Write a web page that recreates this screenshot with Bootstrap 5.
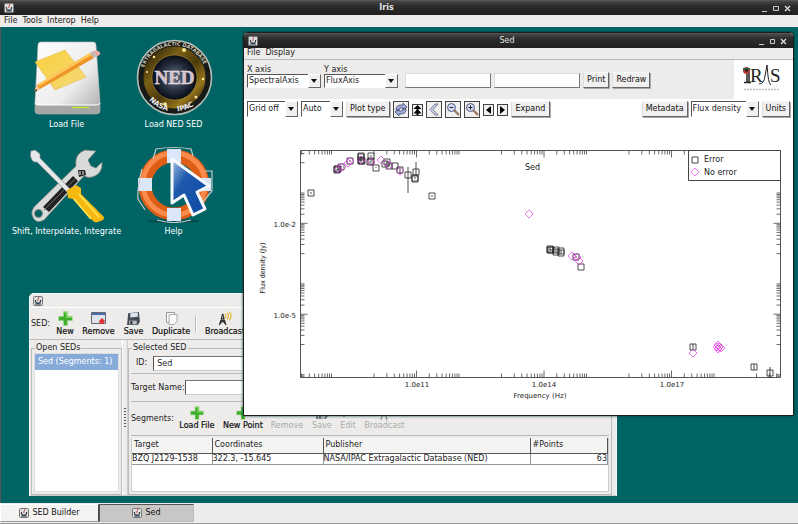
<!DOCTYPE html>
<html lang="en">
<head>
<meta charset="utf-8">
<meta name="viewport" content="width=device-width, initial-scale=1">
<title>Iris</title>
<link href="https://cdn.jsdelivr.net/npm/bootstrap@5.3.0/dist/css/bootstrap.min.css" rel="stylesheet">
<style>
body{font:8px/10px "DejaVu Sans",sans-serif;color:#222;background:#006464}
svg{display:block;flex:none}
.titlebar{height:15px;background:linear-gradient(#484848,#2c2c2c 35%,#1f1f1f);color:#e4e4e4;padding:0 6px 0 4px;border-top:1px solid #555}
.titlebar .caption{font-weight:normal;font-size:8px;line-height:14px;margin:0}
.titlebar.main .caption{font-weight:bold;font-size:8px}
.winbtns button,.plain{background:none;border:0;padding:0;color:inherit;font:inherit;line-height:inherit}
.menus{background:#edeceb;height:12px;line-height:11px;padding-left:4px;gap:5px}
.menus a{color:#1a1a1a;text-decoration:none}
.desktop{border-left:1px solid #555;overflow:hidden}
.launchers{display:grid;grid-template-columns:repeat(2,107px);grid-auto-rows:107px;padding:11px 0 0 12px}
.launchers button{color:#fff;white-space:nowrap}
.launchers svg{margin-bottom:4px}
.win{position:absolute;background:#edeceb}
.builder{left:28px;top:266px;right:181px;border-radius:5px 5px 0 0;border:1px solid #f8f8f8;border-bottom-color:#ccc}
.plotwin{left:242px;top:5px;right:4px;border:1px solid #1d1d1d;border-radius:4px 4px 0 0;overflow:hidden;background:#fff;box-shadow:0 0 3px #003c3c}
.plotwin .menus{border-bottom:1px solid #bbb;padding-left:3px;line-height:10px}
.axisbar{background:#edeceb;height:39px;padding-left:3px;gap:3px}
.axisbar .pad{padding-bottom:11px}
.axisbar label{display:block;line-height:9px}
.toolrow{padding:2px 3px 0;height:25px}
.toolrow,.tight{gap:3px}
.btn3d{background:#f1f0ef;border:1px solid #fafafa;border-color:#fafafa #666 #666 #ddd;box-shadow:1px 1px 0 #aaa;height:16px;padding:0 3px;font:inherit;color:#111;white-space:nowrap}
.btn3d.wide{padding:0 4px}
.ib{border:1px solid #444;background:#f1f0ef;padding:0;width:16px;height:17px}
.ib.sm{width:11px;height:12px}
.combo{display:grid;flex:none}
.combo>*{grid-area:1/1}
.combo select{appearance:none;font:inherit;color:#222;background:#fff;border:1px solid #fff;border-color:#555 #ddd #fff #555;border-radius:0;height:14px;padding:0 14px 0 1px;width:100%}
.toolrow .combo select{height:16px}
.combo::after{content:"";grid-area:1/1;justify-self:end;width:13px;pointer-events:none;border:1px solid #fff;border-color:#fff #666 #666 #fff;background:#f1f0ef}
.combo svg{justify-self:end;align-self:center;margin-right:4px;z-index:1;pointer-events:none}
.combo-axis{width:74px}.combo-grid{width:51px}.combo-scale{width:42px}.combo-flux{width:68px}
.field{font:inherit;background:#fff;border:1px solid #eee;border-color:#777 #ccc #ccc #555;border-radius:0;padding:0 3px;color:#222;height:15px;min-width:0}
.axisbar .field{width:86px;border-color:#ddd #777 #777 #ddd}
.logo{background:#fff;width:59px;height:39px}
.btitle{height:14px;padding:2px 3px;border-bottom:1px solid #fff}
.tools{border-bottom:1px solid #bbb;height:32px;padding-left:1px}
.tools button{white-space:nowrap;color:#111;-webkit-text-stroke:.2px #111}
.tools button:disabled{color:#aaa;-webkit-text-stroke:0}
.tools svg{margin-bottom:1px}
.w1{width:30px}.w2{width:37px}.w3{width:33px}.w4{width:42px}.w5{width:50px}.w6{width:46px}.w7{width:28px}.w8{width:24px}.w9{width:49px}
.vsep{width:2px;height:17px;border-left:1px solid #bbb;background:#fff;margin:0 3px}
.group{border:1px solid #bbb;padding:0 2px 2px;margin-top:3px}
.group legend{font:inherit;float:none;width:auto;margin:0 0 0 1px;padding:0 1px;background:#edeceb;line-height:10px;white-space:nowrap}
.openlist{width:91px;margin-left:1px;flex:none}
.seds{background:#fff;height:139px;border:1px solid #ddd}
.seds .list-group-item{background:#86abd9;color:#fff;border:0;border-radius:0;padding:0 3px;line-height:16px;white-space:nowrap}
.split{width:6px;flex:none;border-right:1px solid #ccc;border-left:1px solid #fff}
.split i{width:2px;height:20px;background:repeating-linear-gradient(#555 0 1px,transparent 1px 3px)}
.idrow{height:21px;padding-left:5px;gap:6px;border-bottom:1px solid #bbb}
.idrow.target{height:28px;padding:0;gap:0}
.seg{height:34px}
.segtable{background:#fff;height:54px;border:1px solid #ccc;border-top:0;margin-top:2px}
.segtable table{width:100%;table-layout:fixed;border-collapse:collapse}
.segtable th{font-weight:normal;height:15px;padding:0 2px;background:#f4f4f3;border-right:1px solid #555;border-bottom:1px solid #555}
.segtable td{height:11px;padding:0;border-right:1px solid #999;border-bottom:1px solid #999;white-space:nowrap;line-height:10px}
.c1{width:80px}.c2{width:111px}.c3{width:207px}
.taskbar{background:#edeceb;height:21px;padding-top:1px;border-bottom:1px solid #999}
.taskbar button{height:18px;border:1px solid #eee;border-color:#fff #444 #999 #fff;background:#f4f3f2;font:inherit;color:#111;width:99px;gap:3px}
.taskbar .active{background:#c8c7c6;border-color:#555 #bbb #bbb #555;width:95px}
.chart{width:100%;height:auto}
.chart text{font-size:8px;fill:#222}
.chart .axis{font-size:7px}
.chart .ylab{font-family:"DejaVu Sans Condensed","DejaVu Sans",sans-serif}
</style>
<script src="https://cdn.jsdelivr.net/npm/bootstrap@5.3.0/dist/js/bootstrap.bundle.min.js"></script>
</head>
<body class="d-flex flex-column vh-100 overflow-hidden">
<svg width="0" height="0" class="position-absolute" aria-hidden="true"><defs>
<symbol id="java" viewBox="0 0 10 10"><rect x=".5" y=".5" width="9" height="9" rx="1" fill="#ddd" stroke="#777"/><path d="M5 1c2 1-1 2 0 4" stroke="#c33" fill="none"/><path d="M2.500 4q-.5 3 2.500 3t2.500-3M2 8h6" stroke="#234" fill="none" stroke-width="1.100"/></symbol>
<symbol id="arrow" viewBox="0 0 6 4"><path d="M0 0h6L3 4z" fill="#111"/></symbol>
<symbol id="plus" viewBox="0 0 14 14"><path d="M5 .5h4V5h4.500v4H9v4.500H5V9H.5V5H5z" fill="#3fae2a" stroke="#b4dfa8" stroke-width=".7"/><path d="M6 1.500h2V6h5" fill="none" stroke="#7fd65f" stroke-width="1.200"/></symbol>
<symbol id="disk" viewBox="0 0 14 14"><path d="M2 2l10-1 1 9-2 3H1z" fill="#454b55"/><path d="M4 2l7-.7v4L4 6z" fill="#dce6f2"/><path d="M3 9h7v3.500H3z" fill="#b9bec6"/><path d="M4 9.500h2v3H4z" fill="#333"/></symbol>
<symbol id="tower" viewBox="0 0 16 16"><path d="M5 3L1.500 15M5 3l3.500 12M3.500 8h3M2.500 11.500h5M3 8l5 6M7 8l-5 6M4 4h2" stroke="#333" stroke-width="1.200" fill="none"/><path d="M7.500 3q2 2 0 4.500M9.700 2q3 3 0 7M12 1q4 4 0 9" stroke="#e0b52c" fill="none" stroke-width="1.200"/></symbol>
<linearGradient id="silver" x2="1" y2="1"><stop stop-color="#fff"/><stop offset=".6" stop-color="#ececec"/><stop offset="1" stop-color="#a9a9a9"/></linearGradient>
<linearGradient id="note" x2="1" y2="1"><stop stop-color="#fbd13e"/><stop offset="1" stop-color="#f3d877"/></linearGradient>
<linearGradient id="blue" x2="1" y2="1"><stop stop-color="#a3c2e6"/><stop offset=".35" stop-color="#1c58ac"/><stop offset="1" stop-color="#0d4aa5"/></linearGradient>
<radialGradient id="space"><stop stop-color="#6b7587"/><stop offset=".6" stop-color="#27303f"/><stop offset="1" stop-color="#080c16"/></radialGradient>
<linearGradient id="gold" x2="1" y2="1"><stop stop-color="#2a230a"/><stop offset=".3" stop-color="#7b6015"/><stop offset=".55" stop-color="#4b390b"/><stop offset=".8" stop-color="#98761c"/><stop offset="1" stop-color="#372a0a"/></linearGradient>
</defs></svg>

<header class="titlebar main d-flex align-items-center">
  <svg width="10" height="10"><use href="#java"/></svg>
  <h1 class="caption flex-grow-1 text-center">Iris</h1>
  <div class="winbtns d-flex">
    <button aria-label="Minimize"><svg width="11" height="10"><path d="M3 8.500h5" stroke="#ccc"/></svg></button>
    <button aria-label="Maximize"><svg width="12" height="10"><path d="M3.500 3.500h5v4h-5z" stroke="#ccc" fill="none"/></svg></button>
    <button aria-label="Close"><svg width="10" height="10"><path d="M3 3l5 5M8 3L3 8" stroke="#ddd" stroke-width="1.300"/></svg></button>
  </div>
</header>
<nav class="menus d-flex" aria-label="Main menu"><a href="#">File</a><a href="#">Tools</a><a href="#">Interop</a><a href="#">Help</a></nav>

<main class="desktop flex-grow-1 position-relative">
  <div class="launchers">
    <button class="plain d-flex flex-column align-items-center">
      <svg width="80" height="78" viewBox="27 38 80 78"><path d="M41 42h52q3 0 3 3l4 57v9q0 3-4 3H39q-4 0-4-3v-9l3-57q0-3 3-3z" fill="url(#silver)" stroke="#bbb" stroke-width=".6"/><path d="M35 103q0 2 4 2h57q4 0 4-2v8q0 3-4 3H39q-4 0-4-3z" fill="#a5a7a5"/><path d="M35 103q0 2 4 2h57q4 0 4-2" fill="none" stroke="#fff"/><path d="M72 107.500h17" stroke="#bde23c" stroke-width="1.500"/><path d="M35 62l30-12 21 27-31 13z" fill="url(#note)" stroke="#e2b338" stroke-width=".5"/><path d="M37 85l53-32 4 5-54 31-6 3z" fill="#ef9427"/><path d="M38 84l52-31 1.500 2-52 31z" fill="#ffc75b"/><path d="M37 85l3 4-6 3z" fill="#ecc894"/><path d="M33.500 92l3-3 .5 2z" fill="#222"/><path d="M90 53l3-2 4 5-3 2z" fill="#bbb"/><path d="M93 51l4-.5q4 1 3 4l-3 2z" fill="#e9a8a4"/></svg>
      <span>Load File</span></button>
    <button class="plain d-flex flex-column align-items-center">
      <svg width="80" height="78" viewBox="134 38 80 78"><circle cx="174.500" cy="77.500" r="37" fill="#171a17" stroke="#b5bdb8" stroke-width="1.600"/><circle cx="174.500" cy="77.500" r="26.500" fill="none" stroke="url(#gold)" stroke-width="9"/><circle cx="174.500" cy="77.500" r="22.500" fill="url(#space)" stroke="#b8983a" stroke-width=".5"/><g fill="#ffe794"><circle cx="184" cy="50" r="2"/><circle cx="154" cy="57" r="1.300"/><circle cx="165" cy="104" r="1.800"/><circle cx="203" cy="79" r="1.300"/><circle cx="196" cy="97" r="1.500"/><circle cx="147" cy="72" r="1"/></g><path id="arc1" d="M142.500 77.500a32 32 0 0 1 64 0" fill="none"/><path id="arc2" d="M146 96a34 34 0 0 0 57 0" fill="none"/><text font-size="5" font-weight="bold" fill="#cfc8b4"><textPath href="#arc1" startOffset="10">EXTRAGALACTIC DATABASE</textPath></text><text font-size="7" font-weight="bold" fill="#eee"><textPath href="#arc2" startOffset="5">NASA&#160;&#160;&#160;&#160;IPAC</textPath></text><text x="174.500" y="84" text-anchor="middle" font-family="Liberation Serif,serif" font-weight="bold" font-size="19" fill="#d4bfca" stroke="#f4e9ef" stroke-width=".4">NED</text></svg>
      <span>Load NED SED</span></button>
    <button class="plain d-flex flex-column align-items-center">
      <svg width="80" height="78" viewBox="27 145 80 78"><path d="M32 215q-1-4 2-8l42-41q-2-12 9-16l11 1-8 9 3 6 5 2 6-6q1 10-7 14-6 3-11 0L44 220q-9 5-12-5z" fill="#d9dbd9" stroke="#777" stroke-width=".7"/><path d="M43 207l30-31 5 5-29 31z" fill="#222"/><path d="M44 210l32-32" stroke="#666"/><circle cx="38.500" cy="213.500" r="4" fill="#006464" stroke="#888"/><path d="M78 170l7 0 1 5-7 2z" fill="#222"/><path d="M80 171v4m3-4v4" stroke="#eee"/><path d="M31 151l4-1 5 4v4l30 31-3 3-30-30h-3q-5-4-3-11z" fill="#e4e6e7" stroke="#888" stroke-width=".6"/><path d="M67 190l9-5 5 3v6l22 22q2 2 0 4l-5 2q-3 1-5-1l-20-22-5-1z" fill="#f5b911"/><path d="M79 194l20 23M74 199l17 20" stroke="#ffe44e" stroke-width="1.800"/></svg>
      <span>Shift, Interpolate, Integrate</span></button>
    <button class="plain d-flex flex-column align-items-center">
      <svg width="80" height="78" viewBox="134 145 80 78"><ellipse cx="173" cy="221" rx="27" ry="2" fill="#00403f" opacity=".6"/><circle cx="174" cy="185" r="29" fill="none" stroke="#de5e16" stroke-width="13"/><circle cx="174" cy="184" r="31" fill="none" stroke="#fa8a4b" stroke-width="5"/><path d="M167 149h14v14h-14zM167 208h14v13h-14zM138 178h14v13h-14zM198 178h13v13h-13z" fill="#dbe7f8"/><path d="M153 159l3-10q18-3 35 0l2 7M142 169q-5 20-4 30l7 11M204 171h8v20l-10 12M157 220q17 5 34 0" fill="none" stroke="#bfcac6" stroke-width="1.200"/><path d="M172 159v44l12-8 9 20 12-6-8-17 12-6z" fill="url(#blue)" stroke="#f6f8fb" stroke-width="3" stroke-linejoin="round"/></svg>
      <span>Help</span></button>
  </div>

  <section class="win builder" aria-label="SED Builder">
    <div class="btitle"><svg width="10" height="10"><use href="#java"/></svg></div>
    <div class="tools d-flex align-items-center">
      <span>SED:</span>
      <button class="plain w1 d-flex flex-column align-items-center"><svg width="15" height="15"><use href="#plus"/></svg>New</button>
      <button class="plain w2 d-flex flex-column align-items-center"><svg width="15" height="15" viewBox="0 0 15 15"><path d="M.5 1.500h14v11H.5z" fill="#dfe3ea" stroke="#667"/><path d="M1 2h13v2H1z" fill="#4a6ea9"/><path d="M8 10l3-3 3 3-2 3H9z" fill="#d33"/></svg>Remove</button>
      <button class="plain w3 d-flex flex-column align-items-center"><svg width="15" height="15"><use href="#disk"/></svg>Save</button>
      <button class="plain w4 d-flex flex-column align-items-center"><svg width="15" height="15" viewBox="0 0 15 15"><path d="M2.500 1.500h8v10h-8z" fill="#fff" stroke="#999"/><path d="M5 3.500h8v7l-3 3H5z" fill="#fafafa" stroke="#aaa"/></svg>Duplicate</button>
      <span class="vsep"></span>
      <button class="plain w5 d-flex flex-column align-items-center"><svg width="15" height="15"><use href="#tower"/></svg>Broadcast</button>
    </div>
    <div class="d-flex">
      <fieldset class="group openlist"><legend>Open SEDs</legend>
        <ul class="list-group seds rounded-0 mb-0"><li class="list-group-item">Sed (Segments: 1)</li></ul>
      </fieldset>
      <div class="split d-flex align-items-center justify-content-center"><i></i></div>
      <fieldset class="group flex-grow-1 me-1"><legend>Selected SED</legend>
        <div class="idrow d-flex align-items-center"><label for="sid">ID:</label><input id="sid" class="field flex-grow-1" value="Sed"></div>
        <div class="idrow target d-flex align-items-center"><label for="tname">Target Name:</label><input id="tname" class="field flex-grow-1"></div>
        <div class="tools seg d-flex align-items-center ps-0">
          <span>Segments:</span>
          <button class="plain w6 d-flex flex-column align-items-center"><svg width="14" height="14"><use href="#plus"/></svg>Load File</button>
          <button class="plain w6 d-flex flex-column align-items-center"><svg width="14" height="14"><use href="#plus"/></svg>New Point</button>
          <button class="plain w4 d-flex flex-column align-items-center" disabled><svg width="14" height="14"><path d="M1 2h12v6H1z" fill="#777"/></svg>Remove</button>
          <button class="plain w7 d-flex flex-column align-items-center" disabled><svg width="14" height="14" opacity=".7"><use href="#disk"/></svg>Save</button>
          <button class="plain w8 d-flex flex-column align-items-center" disabled><svg width="14" height="14"><path d="M2 11l2-6 8-4-2 7z" fill="#888"/></svg>Edit</button>
          <button class="plain w9 d-flex flex-column align-items-center" disabled><svg width="14" height="14"><path d="M4 14L7 4l3 10M5 9h4" stroke="#777" fill="none"/></svg>Broadcast</button>
        </div>
        <div class="segtable"><table>
          <thead><tr><th class="c1">Target</th><th class="c2">Coordinates</th><th class="c3">Publisher</th><th>#Points</th></tr></thead>
          <tbody><tr><td>BZQ J2129-1538</td><td>322.3, -15.645</td><td>NASA/IPAC Extragalactic Database (NED)</td><td class="text-end">63</td></tr></tbody>
        </table></div>
      </fieldset>
    </div>
  </section>

  <section class="win plotwin" aria-label="Sed">
    <div class="titlebar d-flex align-items-center">
      <svg width="10" height="10"><use href="#java"/></svg>
      <h2 class="caption flex-grow-1 text-center">Sed</h2>
      <div class="winbtns d-flex">
        <button aria-label="Minimize"><svg width="11" height="10"><path d="M3 8.500h5" stroke="#ccc"/></svg></button>
        <button aria-label="Maximize"><svg width="11" height="10"><path d="M3.500 3.500h4v4h-4z" stroke="#ccc" fill="none"/></svg></button>
        <button aria-label="Close"><svg width="9" height="10"><path d="M3 3l5 5M8 3L3 8" stroke="#ddd" stroke-width="1.300"/></svg></button>
      </div>
    </div>
    <nav class="menus d-flex" aria-label="Plot menu"><a href="#">File</a><a href="#">Display</a></nav>
    <div class="axisbar d-flex align-items-end">
      <div class="pad"><label for="xa">X axis</label><div class="combo combo-axis"><select id="xa"><option>SpectralAxis</option></select><svg width="6" height="4"><use href="#arrow"/></svg></div></div>
      <div class="pad"><label for="ya">Y axis</label><div class="combo combo-axis"><select id="ya"><option>FluxAxis</option></select><svg width="6" height="4"><use href="#arrow"/></svg></div></div>
      <div class="pad d-flex align-items-end ps-1 tight">
        <input class="field" aria-label="X range"><input class="field" aria-label="Y range">
        <button class="btn3d">Print</button><button class="btn3d">Redraw</button>
      </div>
      <div class="logo ms-auto"><svg width="59" height="39" viewBox="0 0 59 39" role="img" aria-label="Iris"><g font-family="Liberation Serif,serif" font-size="19" fill="#222"><text x="16" y="22">R</text><text x="36" y="22">S</text></g><path d="M10 12h5v10M10 22.500h7M13 14v8" stroke="#222" fill="none" stroke-width="1.500"/><circle cx="12.500" cy="10.500" r="3.500" fill="#b33b35"/><path d="M9 9h7" stroke="#2d6141" stroke-width="2"/><circle cx="12.500" cy="10.500" r="1.200" fill="#111"/><path d="M25 24q5 0 6-8l2-11 1 11q1 8 3 9" fill="none" stroke="#222"/><path d="M10 29.500h36" stroke="#bbb" stroke-width="1.500" stroke-dasharray="2 1"/></svg></div>
    </div>
    <div class="toolrow d-flex align-items-start">
      <div class="combo combo-grid"><select aria-label="Grid"><option>Grid off</option></select><svg width="6" height="4"><use href="#arrow"/></svg></div>
      <div class="combo combo-scale"><select aria-label="Scale"><option>Auto</option></select><svg width="6" height="4"><use href="#arrow"/></svg></div>
      <button class="btn3d">Plot type</button>
      <div class="d-flex align-items-center tight">
        <button class="ib" aria-label="Refresh"><svg width="14" height="15" viewBox="0 0 14 15"><path d="M2 8q0-5 5-5h2V1l4 4-4 3V6H7Q5 6 4 9zM12 7q0 5-5 5H5v2l-4-4 4-3v2h2q2 0 3-3z" fill="#a6afdb" stroke="#394371" stroke-width=".8"/></svg></button>
        <button class="ib sm" aria-label="Top"><svg width="9" height="10" viewBox="0 0 9 10"><path d="M4.500 0L8.500 4h-3v1l3 3.500h-3V10h-2V8.500h-3L3.500 5V4h-3z"/></svg></button>
        <button class="ib" aria-label="Back"><svg width="14" height="15" viewBox="0 0 14 15"><path d="M8 2h3L6 7.500l5 5.500H8L3 7.500z" fill="#d0d5ea" stroke="#596188" stroke-width=".8"/></svg></button>
        <button class="ib" aria-label="Zoom out"><svg width="14" height="15" viewBox="0 0 14 15"><path d="M8 8l5 5" stroke="#9a7458" stroke-width="2.200"/><circle cx="5.500" cy="5.500" r="4" fill="#d3dafa" stroke="#555c82"/><path d="M3.500 5.500h4" stroke="#222"/></svg></button>
        <button class="ib" aria-label="Zoom in"><svg width="14" height="15" viewBox="0 0 14 15"><path d="M8 8l5 5" stroke="#9a7458" stroke-width="2.200"/><circle cx="5.500" cy="5.500" r="4" fill="#d3dafa" stroke="#555c82"/><path d="M3.500 5.500h4M5.500 3.500v4" stroke="#222"/></svg></button>
        <button class="ib sm" aria-label="Left"><svg width="9" height="10" viewBox="0 0 9 10"><path d="M7 1v8L2 5z"/></svg></button>
        <button class="ib sm" aria-label="Right"><svg width="9" height="10" viewBox="0 0 9 10"><path d="M2 1v8l5-4z"/></svg></button>
      </div>
      <button class="btn3d wide">Expand</button>
      <button class="btn3d ms-auto">Metadata</button>
      <div class="combo combo-flux"><select aria-label="Quantity"><option>Flux density</option></select><svg width="6" height="4"><use href="#arrow"/></svg></div>
      <button class="btn3d">Units</button>
    </div>
    <svg class="chart" viewBox="244 124 549 291" role="img" aria-label="Flux density against frequency">
      <path d="M300.500 150.500h480v227h-480z" fill="none" stroke="#555"/>
      <path id="ticks" stroke="#444" stroke-width=".8" fill="none"/>
      <path d="M688.500 150.500h92v30h-92z" fill="#fff" stroke="#444"/>
      <g id="points" fill="none"></g>
      <text x="525" y="170">Sed</text><text x="704" y="162">Error</text><text x="704" y="175">No error</text>
      <g><text class="axis" x="296" y="227" text-anchor="end">1.0e-2</text><text class="axis" x="296" y="318" text-anchor="end">1.0e-5</text>
      <text class="axis" x="417" y="387" text-anchor="middle">1.0e11</text><text class="axis" x="544" y="387" text-anchor="middle">1.0e14</text><text class="axis" x="672" y="387" text-anchor="middle">1.0e17</text>
      <text class="axis" x="540" y="398" text-anchor="middle">Frequency (Hz)</text>
      <text class="axis ylab" transform="translate(265 268) rotate(-90)" text-anchor="middle">Flux density (Jy)</text></g>
    </svg>
  </section>
</main>

<footer class="taskbar d-flex">
  <button class="d-flex align-items-center justify-content-center"><svg width="10" height="10"><use href="#java"/></svg>SED Builder</button>
  <button class="active d-flex align-items-center justify-content-center"><svg width="10" height="10"><use href="#java"/></svg>Sed</button>
</footer>
<script>
// Log-scale ticks: every third decade is labelled, the middle decade has no minor ticks
let d = '';
const xTick = (x, n) => { if (x > 300 && x < 780) d += `M${x} 377.5v-${n}M${x} 150.500v${n}`; };
const yTick = (y, n) => { if (y > 151 && y < 377) d += `M300.500 ${y}h${n}M780.500 ${y}h-${n}`; };
for (let e = 8; e < 20; e++) {
  const x = 416.5 + (e - 11) * 42.5;
  xTick(x, e % 3 === 2 ? 7 : 4);
  if (e % 3 !== 0) for (let m = 2; m < 10; m++) xTick(x + 42.5 * Math.log10(m), 4);
}
for (let e = -8; e <= 0; e++) {
  const y = 223.3 - (e + 2) * 30.3;
  yTick(y, e === -2 || e === -5 ? 7 : 4);
  if (![-1, -4, -7].includes(e)) for (let m = 2; m < 10; m++) yTick(y - 30.3 * Math.log10(m), 4);
}
document.getElementById('ticks').setAttribute('d', d);

// [x, y, error bar top, error bar bottom]
const measured = [[695,160,0,0],[311,193,-1,1],[337,170,-1,1],[338,169,-1,1],[337,169,0,0],[341,167,-1,0],[350,161,-1,1],[361,156,0,0],[361,157,-1,1],[361,160,-1,1],[361,161,-1,1],[362,161,0,0],
 [371,156,-1,1],[371,161,-1,1],[370,162,-1,1],[376,168,-1,0],[385,164,0,0],[387,162,-1,1],[389,166,-1,1],[395,166,0,0],[400,170,-3,4],[408,175,-8,18],[416,172,-10,3],[415,178,-1,1],[415,179,0,0],[432,196,-1,1],
 [550,249,-1,1],[550,250,-1,1],[551,250,-1,1],[556,250,-1,1],[556,252,-1,1],[561,251,-1,1],[561,253,-1,1],[576,257,-1,1],[581,267,0,0],[693,347,-3,3],[754,367,-3,3],[770,373,-6,5]];
const bare = [[695,172],[338,169],[342,167],[348,163],[350,161],[361,160],[371,162],[381,160],[389,165],[400,171],[529,214],[572,256],[577,257],[579,261],[693,353],[717,347],[718,345],[718,349],[719,347],[721,348]];
let marks = '';
for (const [x, y, a, b] of measured) marks += `<path stroke="#222" stroke-width=".8" d="M${x - 3} ${y - 3}h6v6h-6zM${x} ${y + a}V${y + b}"/>`;
for (const [x, y] of bare) marks += `<path stroke="#e63be6" stroke-width=".7" d="M${x} ${y - 4}l4 4-4 4-4-4z"/>`;
document.getElementById('points').innerHTML = marks;
</script>
</body>
</html>
